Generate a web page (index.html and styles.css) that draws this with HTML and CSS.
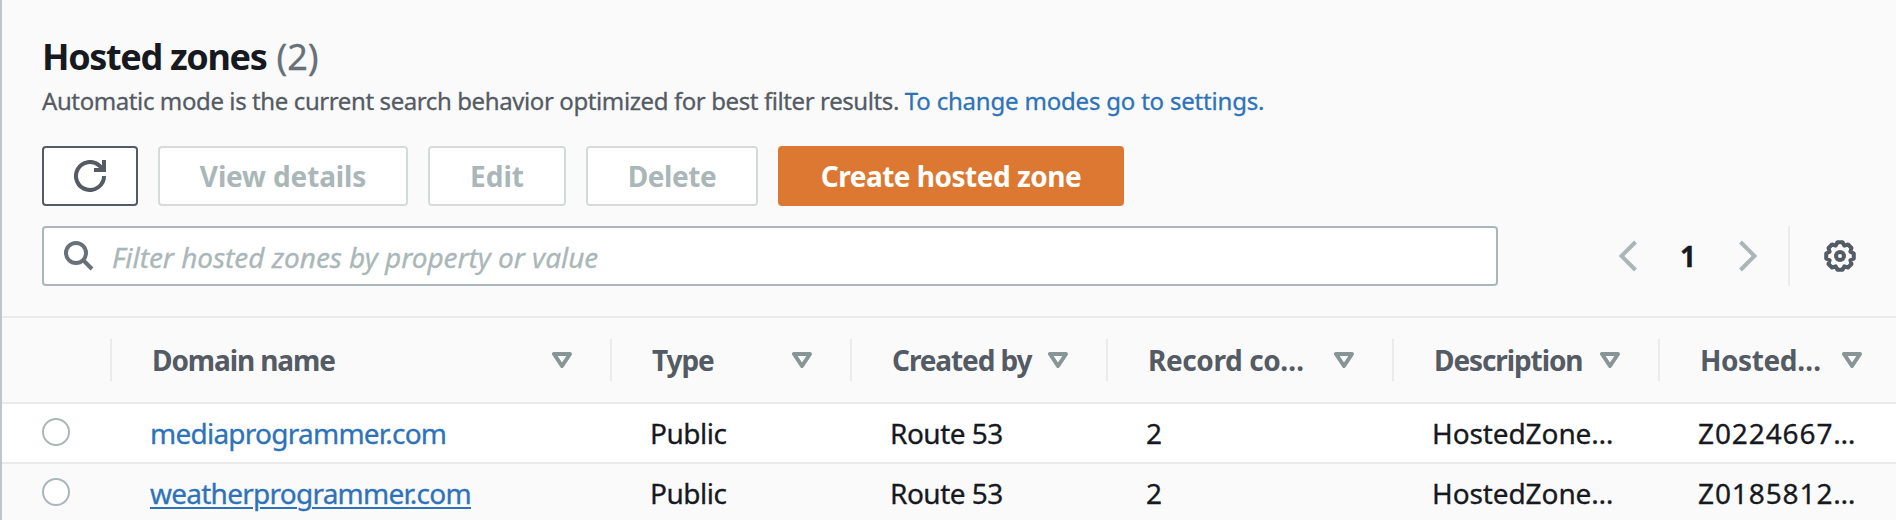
FILE: index.html
```
<!DOCTYPE html>
<html lang="en">
<head>
<meta charset="utf-8">
<title>Hosted zones</title>
<link rel="stylesheet" href="styles.css">
</head>
<body>
<svg width="0" height="0" class="defs">
  <symbol id="caret" viewBox="0 0 20 16"><path d="M2 2H18L10 14Z" fill="none" stroke="currentColor" stroke-width="4" stroke-linejoin="round"/></symbol>
</svg>
<main class="panel">
  <header class="head">
    <h1 class="title">Hosted zones <span class="count">(2)</span></h1>
    <p class="desc">Automatic mode is the current search behavior optimized for best filter results. <a class="desc-link">To change modes go to settings.</a></p>
    <div class="actions">
      <button class="btn btn-refresh" aria-label="Refresh">
        <svg width="32" height="32" viewBox="0 0 32 32" fill="none" stroke="currentColor" stroke-width="4"><path d="M30 16A14 14 0 1 1 25.500 5.700L28.500 9"/><path d="M30 0V10H20"/></svg>
      </button>
      <button class="btn btn-view" disabled>View details</button>
      <button class="btn btn-edit" disabled>Edit</button>
      <button class="btn btn-delete" disabled>Delete</button>
      <button class="btn btn-primary">Create hosted zone</button>
    </div>
    <div class="tools">
      <div class="search">
        <svg width="30" height="30" viewBox="0 0 30 30" fill="none" stroke="currentColor" stroke-width="4"><circle cx="12" cy="12" r="10"/><path d="M19 19L28 28"/></svg>
        <span class="placeholder">Filter hosted zones by property or value</span>
      </div>
      <nav class="pager">
        <svg class="chev" width="20" height="32" viewBox="0 0 20 32"><path d="M17.5 2L3.5 16L17.5 30"/></svg>
        <span class="page">1</span>
        <svg class="chev" width="20" height="32" viewBox="0 0 20 32"><path d="M2.5 2L16.5 16L2.5 30"/></svg>
      </nav>
      <div class="settings">
        <svg width="32" height="32" viewBox="-16 -16 32 32" fill="none" stroke="currentColor" stroke-width="4" stroke-linejoin="round"><path d="M-2.500 -13.800H2.500L4.300 -10.400L8 -11.500L11.500 -8L10.400 -4.300L13.800 -2.500V2.500L10.400 4.300L11.500 8L8 11.500L4.300 10.400L2.500 13.800H-2.500L-4.300 10.400L-8 11.500L-11.500 8L-10.400 4.300L-13.800 2.500V-2.500L-10.400 -4.300L-11.500 -8L-8 -11.500L-4.300 -10.400Z"/><circle r="4"/></svg>
      </div>
    </div>
  </header>
  <div class="grid">
    <div class="row row-head">
      <div class="th th-select"></div>
      <div class="th"><span>Domain name</span><svg class="caret"><use href="#caret"/></svg></div>
      <div class="th"><span>Type</span><svg class="caret"><use href="#caret"/></svg></div>
      <div class="th"><span>Created by</span><svg class="caret"><use href="#caret"/></svg></div>
      <div class="th th-loose"><span>Record co…</span><svg class="caret"><use href="#caret"/></svg></div>
      <div class="th"><span>Description</span><svg class="caret"><use href="#caret"/></svg></div>
      <div class="th th-loose th-last"><span>Hosted…</span><svg class="caret"><use href="#caret"/></svg></div>
    </div>
    <div class="row row-data">
      <div class="select"><span class="radio"></span></div>
      <div class="td"><a class="link">mediaprogrammer.com</a></div>
      <div class="td">Public</div>
      <div class="td">Route 53</div>
      <div class="td">2</div>
      <div class="td td-desc">HostedZone…</div>
      <div class="td td-id">Z0224667…</div>
    </div>
    <div class="row row-data row-hover">
      <div class="select"><span class="radio"></span></div>
      <div class="td"><a class="link link-hover">weatherprogrammer.com</a></div>
      <div class="td">Public</div>
      <div class="td">Route 53</div>
      <div class="td">2</div>
      <div class="td td-desc">HostedZone…</div>
      <div class="td td-id">Z0185812…</div>
    </div>
  </div>
</main>
</body>
</html>
```
FILE: styles.css
```
* { box-sizing: border-box; }
body {
  margin: 0;
  height: 520px;
  overflow: hidden;
  background: #fafafa;
  color: #16191f;
  font: 500 28px/40px "Noto Sans", "Open Sans", sans-serif;
  -webkit-text-stroke: 0.3px currentColor;
}
.defs { display: block; position: absolute; }
.panel { height: 520px; border-left: 2px solid #c0c6ca; overflow: hidden; }
.head { height: 318px; padding: 34px 40px 0 40px; border-bottom: 2px solid #ebebeb; }
.title { margin: 0; font-size: 36px; line-height: 46px; font-weight: 700; letter-spacing: -1.35px; white-space: nowrap; -webkit-text-stroke: 0; }
.count { margin-left: 2px; font-weight: 400; color: #687078; letter-spacing: 0; -webkit-text-stroke: 0.3px currentColor; }
.desc { margin: 3px 0 0; font-size: 24px; line-height: 36px; font-weight: 400; color: #545b64; letter-spacing: -0.4px; white-space: nowrap; }
.desc-link { color: #2e73b8; letter-spacing: -0.2px; }
.actions { display: flex; gap: 20px; margin-top: 27px; }
.btn {
  display: flex;
  align-items: center;
  justify-content: center;
  height: 60px;
  padding: 0;
  border: 2px solid #545b64;
  border-radius: 4px;
  background: #fff;
  color: #545b64;
  font: 700 28px/40px "Noto Sans", "Open Sans", sans-serif;
  white-space: nowrap;
  -webkit-text-stroke: 0;
}
.btn:disabled { border-color: #d5dbdb; color: #aab7b8; }
.btn-refresh { width: 96px; }
.btn-view { width: 250px; letter-spacing: -0.15px; }
.btn-edit { width: 138px; }
.btn-delete { width: 172px; letter-spacing: -0.4px; }
.btn.btn-primary { width: 346px; border-color: #dd7832; background: #dd7832; color: #fff; letter-spacing: -0.5px; }
.tools { display: flex; align-items: center; height: 60px; margin-top: 20px; }
.search {
  display: flex;
  align-items: center;
  gap: 18px;
  width: 1456px;
  height: 60px;
  padding-left: 20px;
  border: 2px solid #aab7b8;
  border-radius: 4px;
  background: #fff;
  color: #687078;
}
.placeholder { padding-top: 2px; font-weight: 400; font-style: italic; color: #aab7b8; letter-spacing: -0.05px; white-space: nowrap; }
.pager { display: flex; align-items: center; justify-content: space-between; width: 140px; margin-left: 120px; }
.chev { fill: none; stroke: #aab7b8; stroke-width: 4; }
.page { font-weight: 700; }
.settings { display: flex; align-items: center; height: 60px; margin-left: 30px; padding-left: 34px; border-left: 2px solid #ebebeb; color: #545b64; }
.row { display: grid; grid-template-columns: 110px 500px 240px 256px 286px 266px 236px; }
.row-head { height: 86px; align-items: center; border-bottom: 2px solid #ebebeb; }
.th {
  display: flex;
  align-items: center;
  justify-content: space-between;
  height: 42px;
  padding: 0 38px 0 40px;
  border-right: 2px solid #ebebeb;
  font-weight: 700;
  color: #545b64;
  letter-spacing: -1.1px;
  white-space: nowrap;
  -webkit-text-stroke: 0;
}
.th-loose { letter-spacing: -0.4px; }
.th-last { padding-right: 34px; border-right: 0; }
.caret { flex: none; width: 20px; height: 16px; color: #879596; }
.row-data { height: 60px; align-items: center; border-bottom: 2px solid #ebebeb; background: #fff; }
.row-data.row-hover { background: #fafafa; }
.select { display: flex; padding: 0 0 2px 40px; }
.radio { width: 28px; height: 28px; border: 2px solid #aab7b8; border-radius: 50%; background: #fff; }
.td { padding-left: 38px; font-weight: 400; letter-spacing: -0.5px; white-space: nowrap; }
.td-desc { letter-spacing: -0.1px; }
.td-id { letter-spacing: 0.9px; }
.link { color: #2e73b8; letter-spacing: -0.75px; }
.link-hover { text-decoration: underline; text-decoration-thickness: 2px; text-underline-offset: 3px; }
```
